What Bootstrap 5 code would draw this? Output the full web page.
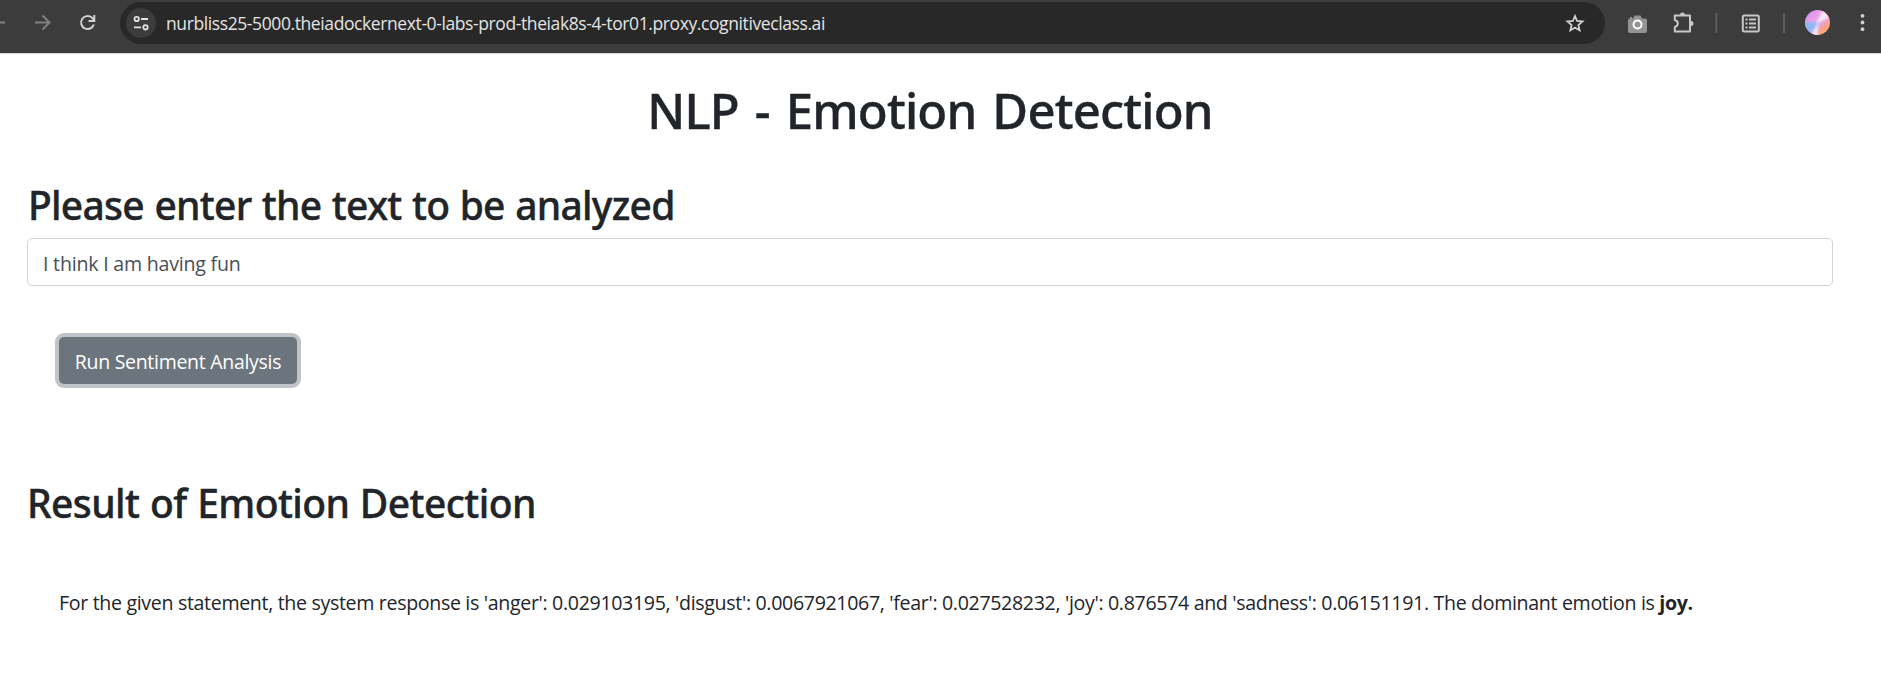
<!DOCTYPE html>
<html lang="en">
<head>
<meta charset="utf-8">
<title>Emotion Detection</title>
<link href="https://cdn.jsdelivr.net/npm/bootstrap@5.3.0/dist/css/bootstrap.min.css" rel="stylesheet">
<style>
body { font-family: "Open Sans", "Noto Sans", sans-serif; font-size: 19.6px; line-height: 30px; color: #212529; overflow: hidden; }
.browser-bar { height: 54px; background: #3c3c3c; border-bottom: 1px solid #d9d9d9; padding: 2px 0 9px; }
.browser-bar svg { display: block; flex: none; }
.nav-icons { width: 120px; }
.address { width: 1485px; height: 42px; border-radius: 21px; background: #282828; color: #e3e3e3; font-size: 17.5px; letter-spacing: -.4px; padding-left: 6px; padding-right: 20px; }
.site-info { width: 30px; height: 30px; border-radius: 50%; background: #3c3c3c; margin-right: 10px; }
.page-body { padding: 26px 48px 0 27px; }
h1, h2 { font-family: "Noto Sans", sans-serif; font-weight: 500; white-space: nowrap; margin: 0; -webkit-text-stroke: .4px #212529; }
h1 { font-size: 49px; line-height: 60px; letter-spacing: -.8px; word-spacing: 4px; }
h2 { font-size: 39px; line-height: 48px; letter-spacing: -.73px; word-spacing: 1px; }
.ask { margin: 41px 0 9px; padding-left: 1px; }
.entry.form-control { height: 48px; border-color: #ced4da; border-radius: 5px; color: #495057; font-size: 19.6px; letter-spacing: -.22px; padding: 9px 15px 7px; }
.run.btn { display: block; margin: 51px 0 0 32px; width: 238px; height: 47px; padding: 2px 0 0; border: 0; border-radius: 5px; background: #6c757d; color: #fff; font-size: 19.5px; letter-spacing: -.29px; box-shadow: 0 0 0 4px rgba(130,138,145,.5); }
.result-title { margin-top: 95px; letter-spacing: -.58px; }
.result { margin: 61px 0 0 32px; white-space: nowrap; letter-spacing: -.335px; }
</style>
</head>
<body>
<header class="browser-bar d-flex align-items-center">
  <svg class="nav-icons" width="120" height="42" viewBox="0 2 120 42" fill="none" stroke-width="2">
    <path d="M0 22.5H5M35 22.5H49M42.5 15.5l7 7-7 7" stroke="#808080"/>
    <path d="M93.800 24.500A6.500 6.500 0 1 1 91.800 17.600L94 20M94.300 15v6H88.500" stroke="#d0d0d0"/>
  </svg>
  <div class="address d-flex align-items-center">
    <span class="site-info d-flex align-items-center justify-content-center">
      <svg width="16" height="16" viewBox="0 0 16 16" fill="none" stroke="#e3e3e3" stroke-width="1.8"><circle cx="3.7" cy="4" r="2.2"/><path d="M8 4h7M1 12.3h7"/><circle cx="12.5" cy="12.3" r="2.2"/></svg>
    </span>
    <span class="flex-grow-1">nurbliss25-5000.theiadockernext-0-labs-prod-theiak8s-4-tor01.proxy.cognitiveclass.ai</span>
    <svg width="20" height="20" viewBox="0 0 20 20" fill="none" stroke="#d0d0d0" stroke-width="1.8"><path d="M10 3l2.100 5 5.400.5-4.100 3.600 1.200 5.300L10 14.600l-4.600 2.800L6.600 12.100 2.500 8.500l5.400-.5z"/></svg>
  </div>
  <svg width="276" height="42" viewBox="1605 2 276 42" fill="none">
    <defs>
      <linearGradient id="orb" x1="0" y1="0" x2="1" y2="1"><stop offset="0" stop-color="#c98af0"/><stop offset=".35" stop-color="#eda0e6"/><stop offset=".55" stop-color="#d8a8ee"/><stop offset=".75" stop-color="#ff9f80"/><stop offset="1" stop-color="#ffc64a"/></linearGradient>
      <clipPath id="disc"><circle cx="1817.5" cy="22.5" r="12.5"/></clipPath>
      <filter id="soft"><feGaussianBlur stdDeviation="1.2"/></filter>
    </defs>
    <path d="M1628 20.500q0-2 2-2v-1.500h2v1.500h1l1.500-3h6l1.500 3h3q2 0 2 2v10.500q0 2-2 2h-15q-2 0-2-2z" fill="#949494"/>
    <circle cx="1637.500" cy="24.500" r="4" stroke="#fff" stroke-width="2"/>
    <path d="M1674.800 15.500h15.200v16h-15.200v-4.500c4-1 4-6 0-7z" stroke="#c7c7c7" stroke-width="2" stroke-linejoin="round"/>
    <path d="M1680 15a2.500 2.500 0 0 1 5 0zM1691 21a2.500 2.500 0 0 1 0 5z" fill="#c7c7c7"/>
    <path d="M1716.300 13v20M1784 13v20" stroke="#5e5e5e" stroke-width="2"/>
    <rect x="1742.800" y="15.600" width="16" height="16" rx="1.500" stroke="#c7c7c7" stroke-width="2"/>
    <path d="M1745.500 19.500h2M1749 19.500h7M1745.500 23.500h2M1749 23.500h7M1745.500 27.500h2M1749 27.500h7" stroke="#c7c7c7" stroke-width="1.800"/>
    <circle cx="1817.500" cy="22.500" r="12.500" fill="url(#orb)"/>
    <g clip-path="url(#disc)"><g filter="url(#soft)">
      <path d="M1819 22.500L1803 22l7 13z" fill="#8db8f5"/>
      <path d="M1818 23L1811 35l7 2z" fill="#f5e4f5"/>
      <path d="M1816 24L1823 9l7 8z" fill="#f8e4f2"/>
    </g></g>
    <g fill="#d0d0d0"><circle cx="1862.500" cy="15.800" r="1.900"/><circle cx="1862.500" cy="22.500" r="1.900"/><circle cx="1862.500" cy="29.200" r="1.900"/></g>
  </svg>
</header>
<main class="page-body">
  <h1 class="text-center">NLP - Emotion Detection</h1>
  <h2 class="ask">Please enter the text to be analyzed</h2>
  <input class="form-control entry" type="text" value="I think I am having fun" aria-label="Text to analyze">
  <button class="btn btn-secondary run" type="button">Run Sentiment Analysis</button>
  <h2 class="result-title">Result of Emotion Detection</h2>
  <p class="result">For the given statement, the system response is 'anger': 0.029103195, 'disgust': 0.0067921067, 'fear': 0.027528232, 'joy': 0.876574 and 'sadness': 0.06151191. The dominant emotion is <b>joy.</b></p>
</main>
<script src="https://cdn.jsdelivr.net/npm/bootstrap@5.3.0/dist/js/bootstrap.bundle.min.js"></script>
</body>
</html>
